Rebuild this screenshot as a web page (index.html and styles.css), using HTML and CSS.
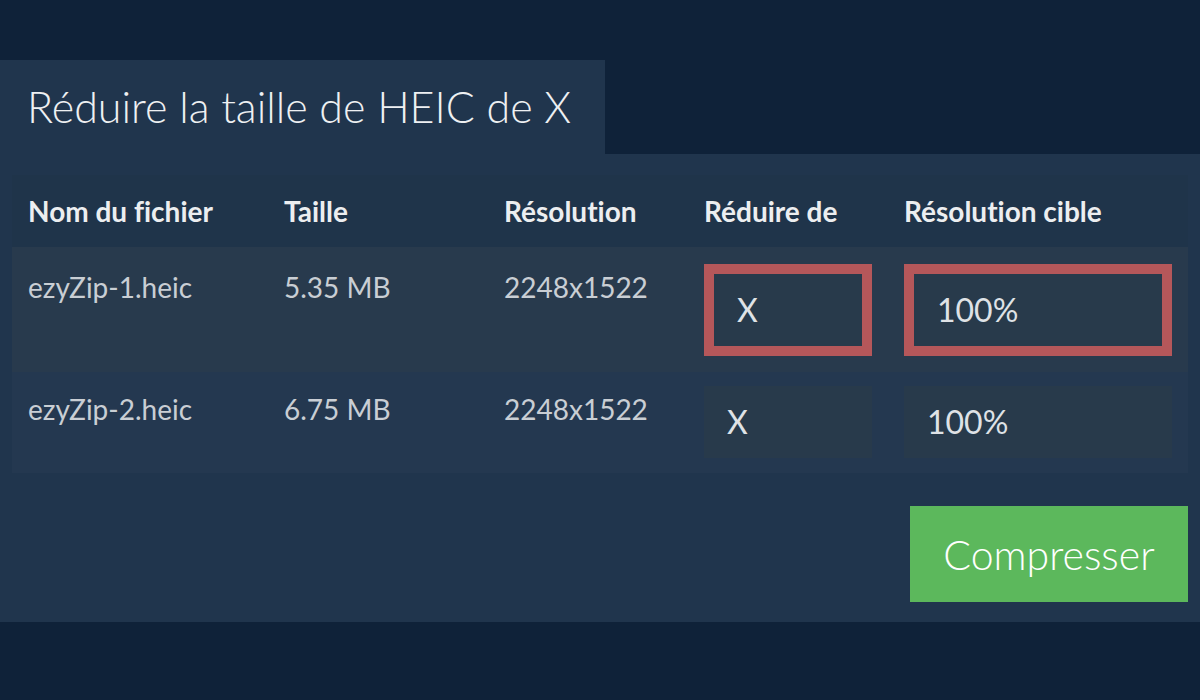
FILE: index.html
```html
<!DOCTYPE html>
<html lang="fr">
<head>
<meta charset="utf-8">
<title>Réduire la taille de HEIC</title>
<link rel="stylesheet" href="styles.css">
</head>
<body>
<div class="page">
  <div class="tab"><h1 class="title">Réduire la taille de HEIC de X</h1></div>
  <div class="panel">
    <table class="files">
      <thead>
        <tr>
          <th class="c1">Nom du fichier</th>
          <th class="c2">Taille</th>
          <th class="c3">Résolution</th>
          <th class="c4">Réduire de</th>
          <th class="c5">Résolution cible</th>
        </tr>
      </thead>
      <tbody>
        <tr class="row row-active">
          <td>ezyZip-1.heic</td>
          <td>5.35 MB</td>
          <td>2248x1522</td>
          <td><div class="field field-hl">X</div></td>
          <td><div class="field field-hl">100%</div></td>
        </tr>
        <tr class="row row-plain">
          <td>ezyZip-2.heic</td>
          <td>6.75 MB</td>
          <td>2248x1522</td>
          <td><div class="field">X</div></td>
          <td><div class="field">100%</div></td>
        </tr>
      </tbody>
    </table>
    <div class="actions"><button class="btn">Compresser</button></div>
  </div>
</div>
</body>
</html>
```
FILE: styles.css
```css
html, body {
  margin: 0;
  padding: 0;
  background: #0f2239;
  font-family: Lato, "Open Sans", "Liberation Sans", sans-serif;
  font-variant-ligatures: none;
  color: #d3d7dc;
}
.page {
  padding-top: 60px;
  width: 1200px;
}
.tab {
  width: 605px;
  height: 94px;
  background: #20354d;
  box-sizing: border-box;
  padding-left: 27px;
  display: flex;
  align-items: center;
}
.title {
  margin: 0;
  font-weight: 300;
  font-size: 43px;
  color: #eef0f2;
  line-height: 1;
  padding-bottom: 2px;
}
.panel {
  background: #20354d;
  padding: 21px 12px 20px 12px;
}
.files {
  width: 1176px;
  border-collapse: collapse;
  table-layout: fixed;
}
.files th {
  background: #1f344a;
  color: #eceef0;
  font-weight: 700;
  font-size: 28px;
  text-align: left;
  padding: 17px 16px;
  line-height: 38px;
}
.c1 { width: 224px; }
.c2 { width: 188px; }
.c3 { width: 168px; }
.c4 { width: 168px; }
.files td {
  vertical-align: top;
  font-size: 28px;
  line-height: 46px;
  padding: 17px 16px 16px 16px;
  color: #c9ced4;
}
.row-active { background: #283a4d; }
.row-plain { background: #243850; }
.row-plain td { padding: 14px 16px 15px 16px; }
.field {
  box-sizing: border-box;
  height: 72px;
  padding: 0 23px;
  font-size: 32px;
  line-height: 72px;
  color: #dfe2e6;
  background: #283a4b;
}
.field-hl {
  height: 92px;
  line-height: 72px;
  border: 10px solid #b5575a;
}
.actions {
  display: flex;
  justify-content: flex-end;
  padding-top: 33px;
}
.btn {
  width: 278px;
  height: 96px;
  background: #5cb85c;
  border: none;
  color: #ffffff;
  font-family: Lato, "Open Sans", "Liberation Sans", sans-serif;
  font-weight: 300;
  font-size: 41px;
  padding: 0;
  cursor: pointer;
}
```
